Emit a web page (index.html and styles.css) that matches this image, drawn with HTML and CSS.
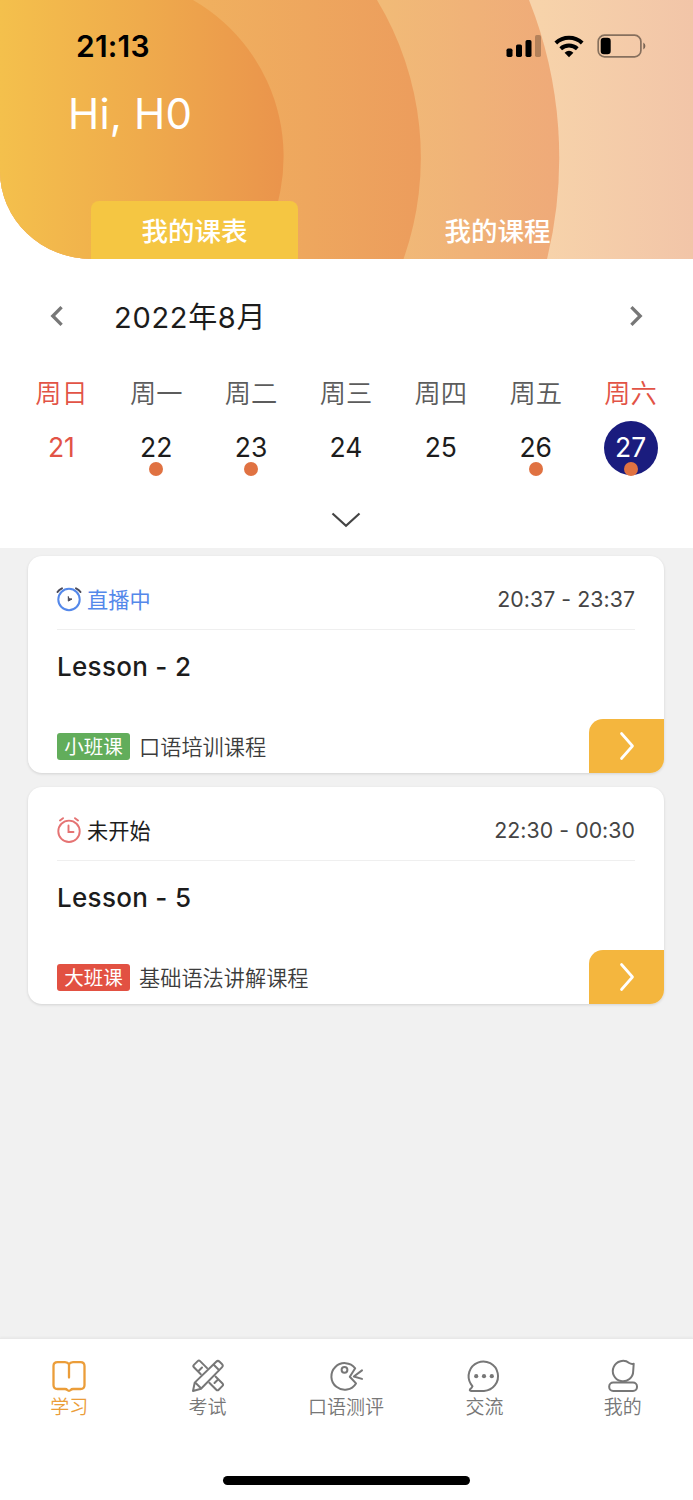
FILE: index.html
```html
<!DOCTYPE html>
<html lang="zh-CN">
<head>
<meta charset="utf-8">
<title>我的课表</title>
<link rel="stylesheet" href="styles.css">
</head>
<body>
<div class="app">
  <header class="hero">
    <svg class="hero-art" viewBox="0 0 693 259" preserveAspectRatio="none" aria-hidden="true">
      <defs>
        <linearGradient id="g0" gradientUnits="userSpaceOnUse" x1="540" y1="0" x2="693" y2="0"><stop offset="0" stop-color="#f7d3aa"/><stop offset="1" stop-color="#f2c5a8"/></linearGradient>
        <linearGradient id="g1" gradientUnits="userSpaceOnUse" x1="385" y1="0" x2="559" y2="0"><stop offset="0" stop-color="#f1ba77"/><stop offset="1" stop-color="#efaa79"/></linearGradient>
        <linearGradient id="g2" gradientUnits="userSpaceOnUse" x1="200" y1="0" x2="420" y2="0"><stop offset="0" stop-color="#f0b05f"/><stop offset="1" stop-color="#ec9d5d"/></linearGradient>
        <linearGradient id="g3" gradientUnits="userSpaceOnUse" x1="0" y1="0" x2="284" y2="0"><stop offset="0" stop-color="#f4c04c"/><stop offset=".5" stop-color="#efab4c"/><stop offset="1" stop-color="#ea944c"/></linearGradient>
      </defs>
      <rect width="693" height="259" fill="url(#g0)"/>
      <path d="M0 0H529A426 426 0 0 1 547 259H0Z" fill="url(#g1)"/>
      <path d="M0 0H377A305 305 0 0 1 403.500 259H0Z" fill="url(#g2)"/>
      <path d="M0 0H193A181 181 0 0 1 252 259H0Z" fill="url(#g3)"/>
    </svg>
    <div class="status">
      <span class="clock">21:13</span>
      <svg class="status-icons" viewBox="0 0 144 28" aria-hidden="true">
        <rect x="3.500" y="15.500" width="6" height="8.500" rx="1.700"/>
        <rect x="13" y="11.500" width="6" height="12.500" rx="1.700"/>
        <rect x="22.500" y="7" width="6" height="17" rx="1.700"/>
        <rect x="32" y="2" width="6" height="22" rx="1.700" opacity=".25"/>
        <g fill="none" stroke="#000" stroke-width="4"><path d="M52.800 10a19.500 19.500 0 0 1 26.400 0"/><path d="M57.700 15.800a12.400 12.400 0 0 1 16.600 0"/></g>
        <path d="M61.600 19.700Q66 16 70.400 19.700L66 24.200Z"/>
        <rect x="95.200" y="2.200" width="42.700" height="21.600" rx="6.300" fill="none" stroke="#000" stroke-opacity=".45" stroke-width="1.700"/>
        <rect x="97.700" y="4.700" width="10" height="16.600" rx="3.200"/>
        <path d="M140.300 9.500a4 4 0 0 1 0 7Z" opacity=".5"/>
      </svg>
    </div>
    <h1 class="greeting">Hi, H0</h1>
    <nav class="tabs">
      <a class="tab tab-active">我的课表</a>
      <a class="tab">我的课程</a>
    </nav>
  </header>

  <section class="calendar">
    <div class="month">
      <svg class="arrow" viewBox="0 0 14 22"><path d="M11.600 2.200 2.800 11l8.800 8.800"/></svg>
      <span class="month-name">2022年8月</span>
      <svg class="arrow" viewBox="0 0 14 22"><path d="M2.400 2.200 11.200 11l-8.800 8.800"/></svg>
    </div>
    <div class="week">
      <div class="day weekend"><span class="name">周日</span><span class="num">21</span></div>
      <div class="day"><span class="name">周一</span><span class="num event">22</span></div>
      <div class="day"><span class="name">周二</span><span class="num event">23</span></div>
      <div class="day"><span class="name">周三</span><span class="num">24</span></div>
      <div class="day"><span class="name">周四</span><span class="num">25</span></div>
      <div class="day"><span class="name">周五</span><span class="num event">26</span></div>
      <div class="day weekend"><span class="name">周六</span><span class="num event selected">27</span></div>
    </div>
    <svg class="expand" viewBox="0 0 30 16"><path d="M1.500 1.500 15 13.700 28.500 1.500"/></svg>
  </section>

  <main class="lessons">
    <article class="card">
      <div class="card-top">
        <svg class="alarm" viewBox="0 0 26 26" fill="none"><circle cx="13" cy="13.500" r="10.700" stroke="#5488ea" stroke-width="2"/><path d="M1.500 6q1.500-2.300 4.500-3.700M24.500 6Q23 3.700 20 2.300" stroke="#4b4a58" stroke-width="2" stroke-linecap="round"/><path d="M12.300 10.500v4.600l3.700-2.100-3-.2Z" fill="#4b4a58" stroke="#4b4a58"/></svg>
        <span class="state live">直播中</span>
        <span class="time">20:37 - 23:37</span>
      </div>
      <h2 class="title">Lesson - 2</h2>
      <div class="card-bottom"><span class="badge small">小班课</span><span class="course">口语培训课程</span>
        <a class="go"><svg viewBox="0 0 16 30"><path d="m2.500 2.500 11 12.500-11 12.500"/></svg></a></div>
    </article>
    <article class="card">
      <div class="card-top">
        <svg class="alarm" viewBox="0 0 26 26" fill="none" stroke="#e57373" stroke-width="1.900" stroke-linecap="round"><circle cx="13" cy="14.300" r="10.700"/><path d="M12.500 8.500v6.500h5M4 3.500l3-2.300M22 3.500l-3-2.300"/></svg>
        <span class="state">未开始</span>
        <span class="time">22:30 - 00:30</span>
      </div>
      <h2 class="title">Lesson - 5</h2>
      <div class="card-bottom"><span class="badge large">大班课</span><span class="course">基础语法讲解课程</span>
        <a class="go"><svg viewBox="0 0 16 30"><path d="m2.500 2.500 11 12.500-11 12.500"/></svg></a></div>
    </article>
  </main>

  <footer class="dock">
    <nav class="menu">
      <a class="item current"><svg viewBox="0 0 36 36"><path stroke-width="2.300" d="M18 6.200Q16.800 4.100 14 4.100H6.500q-4 0-4 4V27q0 4 4 4H14q1.500 0 2.200 1 1.800 1.600 3.600 0 .7-1 2.200-1h7.500q4 0 4-4V8.100q0-4-4-4H22Q19.200 4.100 18 6.200V19.500"/></svg><span>学习</span></a>
      <a class="item"><svg viewBox="0 0 36 36"><path d="M10.800 16.200 3.900 9.300q-1.200-1.200 0-2.400l3.800-3.800q1.200-1.200 2.400 0l7 7M25.500 18.500l7 7q1.200 1.200 0 2.400l-3.800 3.800q-1.200 1.200-2.400 0l-7-7M12 9.500 9 12.500M27.500 22l-3 3"/><path d="M3 33l1.700-8.400L26.200 3.700q1.700-1.600 3.400 0l2.300 2.300q1.700 1.700 0 3.400L11 30.800ZM5.200 24.500l5.800 5.700M23.500 6.500l5.700 5.700"/></svg><span>考试</span></a>
      <a class="item"><svg viewBox="0 0 36 36"><path d="M27.200 10.300A13.300 13.300 0 1 0 28 25.400L21.800 18.700Z"/><circle cx="16.500" cy="11.800" r="2.900"/><path d="M34 12.400 25.800 18.500l8.200 2.400"/></svg><span>口语测评</span></a>
      <a class="item"><svg viewBox="0 0 36 36"><path d="M4.800 25.900A14.700 14.700 0 1 1 18 32.900H5q-1.700 0-1-1.500 2-1.500 2.500-3.100Z"/><g class="dots"><circle cx="10.200" cy="18.200" r="2.100"/><circle cx="18" cy="18.200" r="2.100"/><circle cx="25.800" cy="18.200" r="2.100"/></g></svg><span>交流</span></a>
      <a class="item"><svg viewBox="0 0 36 36"><path d="M24.200 5A10.200 10.200 0 1 0 28.200 13L28.700 5.700q-2.400.7-4.500-.7Z"/><rect x="4.200" y="24.600" width="27.800" height="8.300" rx="4"/></svg><span>我的</span></a>
    </nav>
    <div class="home-bar"></div>
  </footer>
</div>
</body>
</html>
```
FILE: styles.css
```css
* { box-sizing: border-box; }
body { margin: 0; font-family: Inter, "Noto Sans CJK SC", sans-serif; background: #fff; color: #1c1c1c; }
h1, h2 { margin: 0; }
.app { width: 693px; height: 1500px; display: flex; flex-direction: column; background: linear-gradient(#fff 259px, #f1f1f1 259px); }

.hero { position: relative; height: 259px; overflow: hidden; border-bottom-left-radius: 92px 88px; display: flex; flex-direction: column; }
.hero-art { position: absolute; inset: 0; width: 693px; height: 259px; }
.status { position: relative; display: flex; justify-content: space-between; padding: 28px 46px 0 76px; height: 76px; }
.clock { font-size: 30px; line-height: 36px; font-weight: 600; letter-spacing: .2px; color: #000; }
.status-icons { width: 144px; height: 28px; margin-top: 5px; }
.greeting { position: relative; padding-left: 68px; font-size: 42px; line-height: 75px; font-weight: 400; letter-spacing: .2px; color: #fff; }
.tabs { position: relative; margin-top: auto; padding-left: 91px; display: flex; gap: 96px; }
.tab { width: 207px; height: 58px; border-radius: 8px 8px 0 0; text-align: center; font-size: 26.500px; line-height: 60px; font-weight: 500; color: #fff; }
.tab-active { background: #f5c642; }

.calendar { height: 289px; background: #fff; display: flex; flex-direction: column; align-items: center; }
.month { width: 100%; height: 114px; padding: 0 50px; display: flex; align-items: center; }
.arrow { width: 14px; height: 22px; fill: none; stroke: #777; stroke-width: 3.300; }
.month-name { flex: 1; padding-left: 50px; margin-top: -3px; font-size: 29px; font-weight: 400; letter-spacing: .7px; }
.week { width: 664px; margin-right: 1px; display: grid; grid-template-columns: repeat(7, 1fr); }
.day { display: flex; flex-direction: column; align-items: center; }
.name { font-size: 26.300px; line-height: 38px; padding-top: 2px; font-weight: 350; color: #5c5c5c; }
.num { position: relative; width: 54px; height: 54px; margin-top: 8px; border-radius: 50%; text-align: center; font-size: 26.500px; line-height: 53px; }
.weekend .name, .weekend .num { color: #e25346; }
.weekend .selected { background: #1a1c7e; color: #fff; }
.event::after { content: ""; position: absolute; left: 20px; top: 41px; width: 14px; height: 14px; border-radius: 50%; background: #e07242; }
.expand { width: 30px; height: 16px; margin: 37px 1px 0 0; fill: none; stroke: #444; stroke-width: 2.200; }

.lessons { flex: 1; padding: 8px 29px 0 28px; display: flex; flex-direction: column; gap: 14px; }
.card { height: 217px; padding: 0 29px; border-radius: 14px; background: #fff; box-shadow: 0 1px 3px rgba(0,0,0,.13); display: flex; flex-direction: column; }
.card-top { height: 74px; padding-top: 12px; border-bottom: 1px solid #efefef; display: flex; align-items: center; }
.alarm { width: 26px; height: 26px; margin-left: -1px; }
.state { margin-left: 5px; font-size: 21.200px; font-weight: 400; }
.live { color: #5488ea; }
.time { margin-left: auto; font-size: 21.300px; letter-spacing: .05px; color: #444; }
.title { margin-top: 19px; font-size: 26px; line-height: 36px; font-weight: 500; letter-spacing: .3px; }
.card-bottom { margin: auto -29px 0 0; height: 54px; display: flex; align-items: center; }
.badge { width: 73px; height: 27px; border-radius: 3px; text-align: center; font-size: 19.500px; line-height: 29px; color: #fff; }
.small { background: #62ad5b; }
.large { background: #e25142; }
.course { margin: -2px 0 0 9px; font-size: 21.200px; font-weight: 350; color: #3c3c3c; }
.go { width: 75px; height: 54px; margin-left: auto; border-radius: 14px 0 14px 0; background: #f4b63e; display: flex; align-items: center; justify-content: center; }
.go svg { width: 16px; height: 30px; fill: none; stroke: #fff; stroke-width: 2.700; stroke-linecap: round; stroke-linejoin: round; }

.dock { height: 162px; background: #fff; border-top: 1px solid #e8e8e8; box-shadow: 0 -1px 2px rgba(0,0,0,.04); display: flex; flex-direction: column; align-items: center; }
.menu { width: 100%; padding: 19px 1px 0 0; display: grid; grid-template-columns: repeat(5, 1fr); }
.item { display: flex; flex-direction: column; align-items: center; color: #777; font-size: 19px; line-height: 28px; font-weight: 350; }
.item svg { width: 36px; height: 36px; fill: none; stroke: currentColor; stroke-width: 2; stroke-linejoin: round; stroke-linecap: round; }
.item .dots { fill: currentColor; stroke: none; }
.current { color: #eb9d39; }
.home-bar { width: 247px; height: 9px; margin-top: auto; margin-bottom: 15px; border-radius: 5px; background: #000; }
```
